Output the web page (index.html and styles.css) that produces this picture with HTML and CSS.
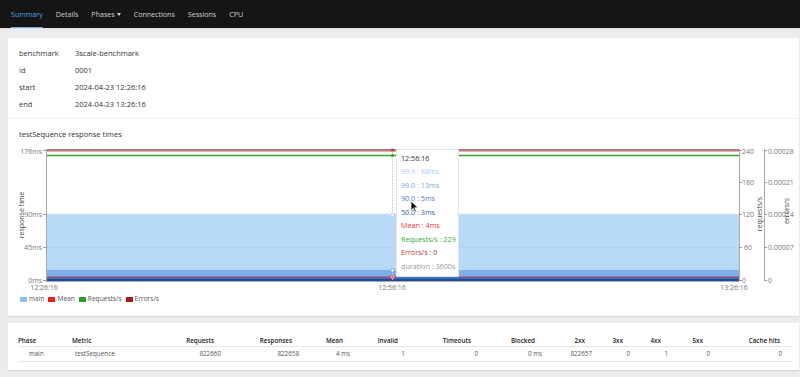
FILE: index.html
```html
<!DOCTYPE html>
<html>
<head>
<meta charset="utf-8">
<link rel="stylesheet" href="styles.css">
</head>
<body>
<nav class="nav">
  <a class="nav-item active">Summary</a>
  <a class="nav-item">Details</a>
  <a class="nav-item">Phases <span class="caret"></span></a>
  <a class="nav-item">Connections</a>
  <a class="nav-item">Sessions</a>
  <a class="nav-item">CPU</a>
</nav>
<main class="page">
  <section class="card card-summary">
    <div class="info">
      <div class="info-row"><span class="info-key">benchmark</span><span>3scale-benchmark</span></div>
      <div class="info-row"><span class="info-key">id</span><span>0001</span></div>
      <div class="info-row"><span class="info-key">start</span><span>2024-04-23 12:26:16</span></div>
      <div class="info-row"><span class="info-key">end</span><span>2024-04-23 13:26:16</span></div>
    </div>
    <div class="divider"></div>
    <div class="chart-title">testSequence response times</div>
    <svg class="chart" width="791" height="150" viewBox="8 142 791 150">
      <!-- areas -->
      <rect x="46" y="214" width="693" height="67" fill="#b9d9f8"/>
      <rect x="46" y="270" width="693" height="7" fill="#7cb0e9"/>
      <rect x="46" y="277" width="693" height="2" fill="#3c6fbd"/>
      <rect x="46" y="279" width="693" height="2" fill="#244f95"/>
      <line x1="46" y1="276.5" x2="739" y2="276.5" stroke="#e05a7a" stroke-width="1"/>
      <!-- grid -->
      <line x1="46" y1="214" x2="739" y2="214" stroke="#d8e4f0" stroke-dasharray="2 2"/>
      <line x1="46" y1="247.5" x2="739" y2="247.5" stroke="#a9c9ea" stroke-dasharray="2 2"/>
      <!-- lines -->
      <line x1="46" y1="150" x2="739" y2="150" stroke="#a84848" stroke-width="1.5"/>
      <line x1="46" y1="151.5" x2="739" y2="151.5" stroke="#d8b8b8" stroke-width="1"/>
      <line x1="46" y1="155.5" x2="739" y2="155.5" stroke="#2fa82f" stroke-width="1.5"/>
      <!-- left axis -->
      <line x1="46.5" y1="149" x2="46.5" y2="281" stroke="#aaa"/>
      <g stroke="#999">
        <line x1="43" y1="150.5" x2="46" y2="150.5"/>
        <line x1="43" y1="214.5" x2="46" y2="214.5"/>
        <line x1="43" y1="247.5" x2="46" y2="247.5"/>
        <line x1="43" y1="280.5" x2="46" y2="280.5"/>
      </g>
      <g class="tick" text-anchor="end">
        <text x="42" y="153.5">176ms</text>
        <text x="42" y="216.5">90ms</text>
        <text x="42" y="249.5">45ms</text>
        <text x="42" y="283">0ms</text>
      </g>
      <text class="axis-label" transform="translate(23.5 215) rotate(-90)" text-anchor="middle">response time</text>
      <!-- bottom axis -->
      <line x1="46" y1="281.5" x2="739" y2="281.5" stroke="#aaa"/>
      <g class="tick" text-anchor="middle">
        <text x="44" y="289.5">12:26:16</text>
        <text x="392" y="289.5">12:56:16</text>
        <text x="734" y="289.5">13:26:16</text>
      </g>
      <!-- right axis 1 -->
      <line x1="739.5" y1="149" x2="739.5" y2="281" stroke="#aaa"/>
      <g stroke="#999">
        <line x1="739" y1="150.5" x2="742" y2="150.5"/>
        <line x1="739" y1="182.5" x2="742" y2="182.5"/>
        <line x1="739" y1="214.5" x2="742" y2="214.5"/>
        <line x1="739" y1="247.5" x2="742" y2="247.5"/>
        <line x1="739" y1="280.5" x2="742" y2="280.5"/>
      </g>
      <g class="tick">
        <text x="742" y="153.5">240</text>
        <text x="742" y="185">180</text>
        <text x="742" y="217">120</text>
        <text x="744" y="250">60</text>
        <text x="742" y="282.5">0</text>
      </g>
      <text class="axis-label" transform="translate(762 214) rotate(-90)" text-anchor="middle">requests/s</text>
      <!-- right axis 2 -->
      <line x1="764.5" y1="149" x2="764.5" y2="281" stroke="#aaa"/>
      <g stroke="#999">
        <line x1="764" y1="150.5" x2="767" y2="150.5"/>
        <line x1="764" y1="182.5" x2="767" y2="182.5"/>
        <line x1="764" y1="214.5" x2="767" y2="214.5"/>
        <line x1="764" y1="247.5" x2="767" y2="247.5"/>
        <line x1="764" y1="280.5" x2="767" y2="280.5"/>
      </g>
      <g class="tick">
        <text x="768" y="153.5">0.00028</text>
        <text x="768" y="185">0.00021</text>
        <text x="768" y="217">0.00014</text>
        <text x="768" y="250">0.00007</text>
        <text x="768" y="283">0</text>
      </g>
      <text class="axis-label" transform="translate(789 211) rotate(-90)" text-anchor="middle">errors/s</text>
      <!-- hover line and points -->
      <line x1="392.5" y1="149" x2="392.5" y2="281" stroke="#cfd6de" stroke-dasharray="2 1"/>
      <circle cx="392.5" cy="150" r="1.6" fill="#a84848"/>
      <circle cx="392.5" cy="155.5" r="1.6" fill="#2fa82f"/>
      <circle cx="392.5" cy="215" r="1.8" fill="#fff" stroke="#9cc4ee" stroke-width="0.8"/>
      <circle cx="392.5" cy="270.5" r="1.8" fill="#fff" stroke="#5b93d6" stroke-width="0.8"/>
      <circle cx="392.5" cy="277" r="2" fill="#fff" stroke="#e03050" stroke-width="0.8"/>
      <circle cx="392.5" cy="277" r="0.9" fill="#e03050"/>
      <!-- tooltip -->
      <rect x="396.5" y="149.5" width="62" height="127" fill="#fff" stroke="#e4e4e4"/>
      <g class="tip">
        <text x="401" y="161" fill="#333">12:56:16</text>
        <text x="401" y="174" fill="#a9cdf2">99.9 : 88ms</text>
        <text x="401" y="187.5" fill="#79aae2">99.0 : 13ms</text>
        <text x="401" y="201" fill="#4a7dc4">90.0 : 5ms</text>
        <text x="401" y="214.5" fill="#2f5c9e">50.0 : 3ms</text>
        <text x="401" y="228" fill="#e23a3a">Mean : 4ms</text>
        <text x="401" y="241.5" fill="#3aa83a">Requests/s : 229</text>
        <text x="401" y="255" fill="#b23636">Errors/s : 0</text>
        <text x="401" y="268.5" fill="#9a9a9a">duration : 3600s</text>
      </g>
      <!-- cursor -->
      <path d="M411 201 L411 210.5 L413.3 208.3 L415 212 L416.4 211.4 L414.7 207.7 L417.8 207.7 Z" fill="#111" stroke="#fff" stroke-width="0.7"/>
    </svg>
    <div class="legend">
      <span class="legend-item"><i class="swatch sw-main"></i>main</span>
      <span class="legend-item"><i class="swatch sw-mean"></i>Mean</span>
      <span class="legend-item"><i class="swatch sw-req"></i>Requests/s</span>
      <span class="legend-item"><i class="swatch sw-err"></i>Errors/s</span>
    </div>
  </section>
  <section class="card card-table">
    <table class="stats">
      <colgroup>
        <col style="width:54px"><col style="width:78px"><col style="width:71px"><col style="width:78px"><col style="width:51px"><col style="width:55px"><col style="width:73px"><col style="width:64px"><col style="width:50px"><col style="width:38px"><col style="width:38px"><col style="width:42px"><col style="width:82px">
      </colgroup>
      <thead>
        <tr>
          <th class="l">Phase</th><th class="l">Metric</th><th>Requests</th><th>Responses</th><th>Mean</th><th>Invalid</th><th>Timeouts</th><th>Blocked</th><th>2xx</th><th>3xx</th><th>4xx</th><th>5xx</th><th class="last">Cache hits</th>
        </tr>
      </thead>
      <tbody>
        <tr>
          <td class="phase">main</td><td class="metric">testSequence</td><td>822660</td><td>822658</td><td>4 ms</td><td>1</td><td>0</td><td>0 ms</td><td>822657</td><td>0</td><td>1</td><td>0</td><td class="last">0</td>
        </tr>
      </tbody>
    </table>
  </section>
</main>
</body>
</html>
```

FILE: styles.css
```css
* { box-sizing: border-box; }
html, body { margin: 0; padding: 0; }
body {
  background: #ececec;
  font-family: "Open Sans", "Noto Sans", sans-serif;
  font-size: 7.5px;
  color: #333;
  width: 800px;
  height: 377px;
  overflow: hidden;
}
.nav {
  height: 29px;
  background: #151515;
  border-bottom: 1px solid #dcdcdc;
  display: flex;
  align-items: flex-start;
  gap: 13px;
  padding: 0 0 0 11px;
}
.nav-item {
  color: #d2d2d2;
  font-size: 7.1px;
  height: 28px;
  line-height: 26px;
  position: relative;
  display: flex;
  align-items: center;
  gap: 2px;
}
.nav-item.active { color: #4aa0e8; }
.nav-item.active::after {
  content: "";
  position: absolute;
  left: 0; right: 0; bottom: 0;
  height: 1px;
  background: #73a9d8;
}
.caret {
  display: inline-block;
  width: 0; height: 0;
  border-left: 2.5px solid transparent;
  border-right: 2.5px solid transparent;
  border-top: 3px solid #d2d2d2;
}
.page {
  padding: 9px 1px 0 8px;
  display: flex;
  flex-direction: column;
  gap: 7px;
}
.card {
  background: #fff;
  box-shadow: 0 1px 1px rgba(0,0,0,0.08);
}
.card-summary {
  height: 278px;
  padding-top: 6px;
}
.info { padding-left: 11px; }
.info-row {
  height: 17px;
  display: flex;
  align-items: center;
}
.info-key { width: 56px; }
.divider {
  margin-top: 6px;
  height: 1px;
  background: #f0f0f0;
}
.chart-title {
  padding-left: 11px;
  padding-top: 6px;
  height: 23px;
  display: flex;
  align-items: center;
}
.chart {
  display: block;
  font-family: "Open Sans", "Noto Sans", sans-serif;
}
.tick { font-size: 7px; fill: #777; }
.axis-label { font-size: 7px; fill: #444; }
.tip { font-size: 7.2px; }
.legend {
  padding-left: 12px;
  margin-top: 2px;
  display: flex;
  gap: 4px;
  color: #555;
  font-size: 6.6px;
  line-height: 10px;
}
.legend-item { display: flex; align-items: center; gap: 2px; }
.swatch { display: inline-block; width: 7px; height: 5px; }
.sw-main { background: #8fbfec; }
.sw-mean { background: #ee1c1c; }
.sw-req { background: #27a027; }
.sw-err { background: #9e1a1a; }
.card-table {
  height: 47px;
  padding: 12px 0 0 10px;
}
.stats {
  border-collapse: collapse;
  table-layout: fixed;
  width: 774px;
  font-size: 6.3px;
  color: #555;
}
.stats th {
  font-weight: 600;
  color: #222;
  text-align: right;
  padding: 0 7px 0 0;
  height: 11px;
  border-bottom: 1px solid #e6e6e6;
  white-space: nowrap;
}
.stats th.l { text-align: left; }
.stats th.last { padding-right: 12px; }
.stats td {
  text-align: right;
  padding: 0;
  height: 15px;
  border-bottom: 1px solid #e6e6e6;
  white-space: nowrap;
}
.stats td.last { padding-right: 10px; }
.stats td.phase { text-align: left; padding-left: 11px; }
.stats td.metric { text-align: left; padding-left: 3px; }
```
